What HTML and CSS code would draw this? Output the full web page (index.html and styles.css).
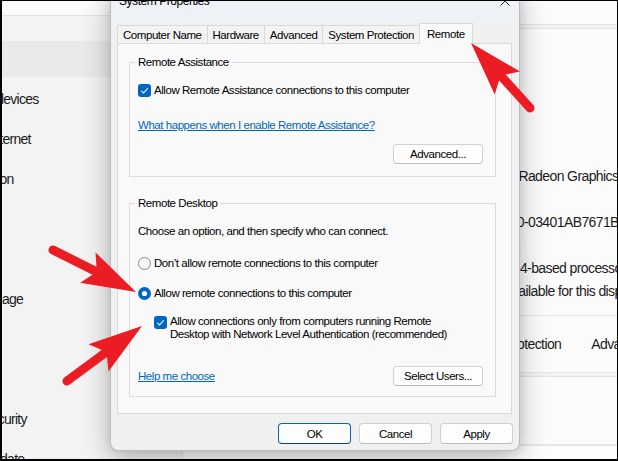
FILE: index.html
```html
<!DOCTYPE html>
<html lang="en">
<head>
    <meta charset="UTF-8">
    <meta name="viewport" content="width=device-width, initial-scale=1.0">
    <title>System Properties</title>
    <link rel="stylesheet" href="styles.css">
</head>
<body>
<div class="screen">

    <aside class="sidebar">
        <div class="search"></div>
        <nav class="nav">
            <div class="nav-item active">System</div>
            <div class="nav-item">Bluetooth &amp; devices</div>
            <div class="nav-item">Network &amp; internet</div>
            <div class="nav-item">Personalization</div>
            <div class="nav-item">Apps</div>
            <div class="nav-item">Accounts</div>
            <div class="nav-item">Time &amp; language</div>
            <div class="nav-item">Gaming</div>
            <div class="nav-item">Accessibility</div>
            <div class="nav-item">Privacy &amp; security</div>
            <div class="nav-item">Windows Update</div>
        </nav>
    </aside>

    <main class="content">
        <div class="card card-head"></div>
        <div class="card specs">
            <div class="spec"><span>Device name</span><span>DESKTOP-4K7</span></div>
            <div class="spec"><span>Processor</span><span>AMD Ryzen 7 5800H with Radeon Graphics&nbsp;&nbsp;&nbsp;&nbsp;3.20 GHz</span></div>
            <div class="spec"><span>Installed RAM</span><span>16.0 GB</span></div>
            <div class="spec"><span>Device ID</span><span>31245678-1234-4321-8910-03401AB7671B</span></div>
            <div class="spec"><span>Product ID</span><span>00342-80000-00000-AA52</span></div>
            <div class="spec"><span>System type</span><span>64-bit operating system, x64-based processor</span></div>
            <div class="spec"><span>Pen and touch</span><span>No pen or touch input is available for this display</span></div>
            <div class="related">
                <span class="related-label">Related links</span>
                <span>Domain or workgroup</span>
                <span>System protection</span>
                <span>Advanced system settings</span>
            </div>
        </div>
        <div class="card more"></div>
        <div class="card last"></div>
    </main>

    <div class="dialog">
        <div class="titlebar">
            <span>System Properties</span>
            <svg class="close" width="10" height="10" viewBox="0 0 10 10">
                <path d="M0.5 0.5 L9.5 9.5 M9.5 0.5 L0.5 9.5" stroke="#222" stroke-width="1"/>
            </svg>
        </div>

        <div class="tabs">
            <div class="tab">Computer Name</div>
            <div class="tab">Hardware</div>
            <div class="tab">Advanced</div>
            <div class="tab">System Protection</div>
            <div class="tab active">Remote</div>
        </div>

        <div class="panel">
            <fieldset class="group assist">
                <legend>Remote Assistance</legend>
                <label class="option">
                    <svg class="box" width="13" height="13" viewBox="0 0 13 13"><rect width="13" height="13" rx="3" fill="#0067c0"/><path d="M3.4 6.9 L5.5 9 L9.7 4.4" fill="none" stroke="#fff" stroke-width="1.1"/></svg>
                    Allow Remote Assistance connections to this computer
                </label>
                <div class="link-row"><a class="link" href="#">What happens when I enable Remote Assistance?</a></div>
                <div class="btn-row"><button class="btn">Advanced...</button></div>
            </fieldset>

            <fieldset class="group desktop">
                <legend>Remote Desktop</legend>
                <div class="option">Choose an option, and then specify who can connect.</div>
                <label class="option radio-first">
                    <svg class="box" width="13" height="13" viewBox="0 0 13 13"><circle cx="6.5" cy="6.5" r="6" fill="#f7f7f7" stroke="#878787" stroke-width="1"/></svg>
                    Don’t allow remote connections to this computer
                </label>
                <label class="option radio-second">
                    <svg class="box" width="13" height="13" viewBox="0 0 13 13"><circle cx="6.5" cy="6.5" r="6.5" fill="#0067c0"/><circle cx="6.5" cy="6.5" r="2.6" fill="#fff"/></svg>
                    Allow remote connections to this computer
                </label>
                <label class="option sub">
                    <svg class="box" width="13" height="13" viewBox="0 0 13 13"><rect width="13" height="13" rx="3" fill="#0067c0"/><path d="M3.4 6.9 L5.5 9 L9.7 4.4" fill="none" stroke="#fff" stroke-width="1.1"/></svg>
                    <span>Allow connections only from computers running Remote<br>Desktop with Network Level Authentication (recommended)</span>
                </label>
                <div class="footer-row">
                    <a class="link" href="#">Help me choose</a>
                    <button class="btn">Select Users...</button>
                </div>
            </fieldset>
        </div>

        <div class="actions">
            <button class="btn action default">OK</button>
            <button class="btn action">Cancel</button>
            <button class="btn action">Apply</button>
        </div>
    </div>

    <svg class="arrows" width="618" height="461" viewBox="0 0 618 461">
        <g stroke="#ec1c24" stroke-width="9" stroke-linecap="round">
            <line x1="530" y1="108" x2="502" y2="77"/>
            <line x1="53" y1="250" x2="95" y2="271"/>
            <line x1="67" y1="381" x2="105" y2="353"/>
        </g>
        <g fill="#ec1c24">
            <polygon points="471,43 520,71.6 500.6,75.6 494.7,94.4"/>
            <polygon points="136,292 95.5,252.4 96.8,272.1 80.1,282.8"/>
            <polygon points="142,326 108.5,371.6 106.5,352 88.5,344.2"/>
        </g>
    </svg>
</div>
</body>
</html>
```

FILE: styles.css
```css
body {
    margin: 0;
    font-family: "Liberation Sans", Arial, sans-serif;
}
.screen {
    position: relative;
    width: 618px;
    height: 461px;
    overflow: hidden;
    background: #f3f3f3;
    display: flex;
}
.screen::after {
    content: "";
    position: absolute;
    inset: 0;
    border-style: solid;
    border-color: #000;
    border-width: 1px 1px 2px 2px;
    z-index: 10;
    pointer-events: none;
}

/* settings window behind the dialog */
.sidebar {
    width: 176px;
    flex: none;
    display: flex;
    flex-direction: column;
}
.search {
    flex: none;
    height: 15px;
    background: #fbfbfb;
    border-bottom: 1px solid #e2e2e2;
}
.nav {
    flex: none;
    margin: 25px 0 0 -71px;
}
.nav-item {
    height: 36px;
    margin-bottom: 4px;
    display: flex;
    align-items: center;
    font-size: 14px;
    letter-spacing: -0.75px;
    color: #1b1b1b;
    white-space: nowrap;
    border-radius: 4px;
}
.nav-item.active {
    background: #eaeaea;
}
.content {
    flex: 1;
    padding-left: 6px;
    display: flex;
    flex-direction: column;
    font-size: 14px;
    letter-spacing: -0.6px;
    color: #1b1b1b;
}
.card {
    background: #fbfbfb;
    border: 1px solid #e5e5e5;
    border-radius: 4px;
    margin-right: -20px;
    flex: none;
}
.card-head {
    height: 28px;
    margin-top: -5px;
}
.specs {
    margin-top: 3px;
    padding-top: 112px;
}
.spec {
    display: grid;
    grid-template-columns: 169px 1fr;
    height: 23px;
    align-items: center;
    padding-left: 16px;
    white-space: nowrap;
}
.related {
    margin-top: 13px;
    height: 56px;
    border-top: 1px solid #e5e5e5;
    display: flex;
    align-items: center;
    gap: 30px;
    padding-left: 16px;
    white-space: nowrap;
}
.related-label {
    width: 78px;
    flex: none;
}
.more {
    margin-top: 3px;
    height: 67px;
}
.last {
    height: 40px;
    background: #fdfdfd;
}

/* System Properties dialog */
.dialog {
    position: absolute;
    left: 110px;
    top: -14px;
    width: 410px;
    height: 465px;
    box-sizing: border-box;
    background: #f0f0f0;
    border: 1px solid rgba(0, 0, 0, 0.22);
    border-radius: 8px;
    box-shadow: 0 8px 28px rgba(0, 0, 0, 0.28), 0 0 10px rgba(0, 0, 0, 0.08);
    display: flex;
    flex-direction: column;
    font-size: 11.5px;
    letter-spacing: -0.45px;
    color: #000;
    z-index: 2;
}
.titlebar {
    height: 36px;
    box-sizing: border-box;
    padding: 0 9px 8px 8px;
    display: flex;
    align-items: center;
    justify-content: space-between;
    font-size: 12px;
    background: #eef1f5;
    border-radius: 8px 8px 0 0;
}
.tabs {
    display: flex;
    align-items: flex-end;
    height: 20px;
    padding-left: 6px;
}
.tab {
    height: 18px;
    box-sizing: border-box;
    padding: 0 5px;
    border: 1px solid #d9d9d9;
    border-bottom: 0;
    margin-right: -1px;
    display: flex;
    align-items: center;
    background: #f3f3f3;
}
.tab.active {
    height: 21px;
    margin-bottom: -1px;
    padding: 0 7px;
    background: #f9f9f9;
    position: relative;
    z-index: 1;
}
.panel {
    margin: 0 7px 0 6px;
    height: 371px;
    box-sizing: border-box;
    border: 1px solid #d9d9d9;
    background: #f9f9f9;
    padding: 11px 15px 0 11px;
}
.group {
    margin: 0;
    min-width: 0;
    border: 1px solid #dcdcdc;
    padding: 13px 12px 12px 8px;
}
.group legend {
    padding: 0 3px;
    margin-left: -3px;
    line-height: 14px;
}
.group.desktop {
    margin-top: 19px;
    padding-bottom: 10px;
}
.option {
    display: flex;
    align-items: center;
    gap: 3px;
    height: 16px;
    white-space: nowrap;
}
.box {
    flex: none;
}
.radio-first {
    margin-top: 16px;
}
.radio-second {
    margin-top: 14px;
}
.option.sub {
    margin: 14px 0 0 16px;
    height: auto;
    align-items: flex-start;
    line-height: 13px;
}
.option.sub .box {
    margin-top: 1px;
}
.link-row {
    margin-top: 19px;
    line-height: 16px;
}
.link {
    color: #0067c0;
    text-decoration: underline;
}
.btn-row {
    margin-top: 11px;
    display: flex;
    justify-content: flex-end;
}
.btn {
    height: 20px;
    width: 90px;
    padding: 0;
    font-family: inherit;
    font-size: inherit;
    letter-spacing: inherit;
    color: #000;
    background: #fdfdfd;
    border: 1px solid #d0d0d0;
    border-bottom-color: #bdbdbd;
    border-radius: 4px;
}
.footer-row {
    margin-top: 25px;
    display: flex;
    align-items: center;
    justify-content: space-between;
}
.actions {
    margin-top: 9px;
    padding-right: 6px;
    display: flex;
    justify-content: flex-end;
    gap: 8px;
}
.btn.action {
    width: 73px;
    height: 21px;
}
.btn.default {
    border-color: #0067c0;
    border-bottom-color: #00457f;
}

.arrows {
    position: absolute;
    left: 0;
    top: 0;
    z-index: 5;
    pointer-events: none;
}
```
